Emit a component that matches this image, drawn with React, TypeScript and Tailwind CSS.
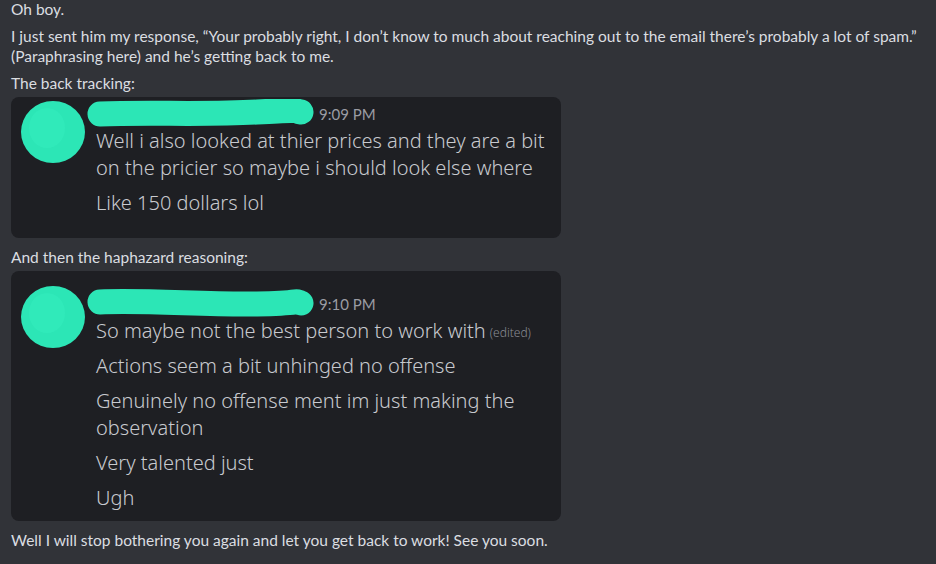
import React from "react";

interface Para {
  lines: string[];
  edited?: boolean;
}

interface CardProps {
  time: string;
  padTop: number;
  padBottom: number;
  avatarCy: number;
  blob: string;
  paras: Para[];
}

const teal = "#2ce6b6";

const Avatar = ({ cy }: { cy: number }) => (
  <svg width="76" height={cy + 34} className="shrink-0">
    <ellipse cx="42" cy={cy} rx="32" ry="31" fill={teal} />
    <ellipse cx="36" cy={cy - 4} rx="18" ry="20" fill="#3af0c2" opacity="0.35" />
  </svg>
);

const NameBlob = ({ d }: { d: string }) => (
  <svg width="228" height="28" className="shrink-0">
    <path d={d} stroke={teal} strokeWidth="25" strokeLinecap="round" fill="none" />
  </svg>
);

const Card = ({ time, padTop, padBottom, avatarCy, blob, paras }: CardProps) => (
  <div className="w-[550px] rounded-lg bg-[#1e1f23] flex items-start">
    <Avatar cy={avatarCy} />
    <div
      className="flex flex-col"
      style={{ paddingTop: padTop, paddingBottom: padBottom }}
    >
      <div className="flex items-center h-[28px]">
        <NameBlob d={blob} />
        <span className="ml-[4px] mt-[2px] text-[15px] text-[#9a9ca3]">{time}</span>
      </div>
      <div
        className="pl-[9px] flex flex-col gap-[8px] text-[20px] leading-[27px] font-light text-[#c8cacf]"
        style={{ fontFamily: '"Noto Sans", sans-serif' }}
      >
        {paras.map((p, i) => (
          <p key={i}>
            {p.lines.map((l, j) => (
              <React.Fragment key={j}>
                {j > 0 && <br />}
                {l}
              </React.Fragment>
            ))}
            {p.edited && (
              <span className="ml-[4px] text-[12px] leading-none align-middle text-[#8a8d94]">
                (edited)
              </span>
            )}
          </p>
        ))}
      </div>
    </div>
  </div>
);

export default function App() {
  return (
    <div
      className="w-[936px] h-[564px] overflow-hidden bg-[#313338] pl-[11px] text-[15.5px] leading-[20px] text-[#dbdee1]"
      style={{ fontFamily: "Lato, sans-serif" }}
    >
      <div className="flex flex-col gap-[7px] -mt-[1px]">
        <p>Oh boy.</p>
        <p className="whitespace-nowrap">
          I just sent him my response, “Your probably right, I don’t know to much about reaching out to the email there’s probably a lot of spam.”
          <br />
          (Paraphrasing here) and he’s getting back to me.
        </p>
        <p>The back tracking:</p>
      </div>
      <div className="mt-[4px]">
        <Card
          time="9:09 PM"
          padTop={2}
          padBottom={22}
          avatarCy={35}
          blob="M13 15 C60 13 120 16 170 13 S205 12 214 13"
          paras={[
            {
              lines: [
                "Well i also looked at thier prices and they are a bit",
                "on the pricier so maybe i should look else where",
              ],
            },
            { lines: ["Like 150 dollars lol"] },
          ]}
        />
      </div>
      <p className="mt-[9px]">And then the haphazard reasoning:</p>
      <div className="mt-[4px]">
        <Card
          time="9:10 PM"
          padTop={18}
          padBottom={10}
          avatarCy={46}
          blob="M13 13 C60 11 120 16 170 15 S205 11 214 14"
          paras={[
            { lines: ["So maybe not the best person to work with"], edited: true },
            { lines: ["Actions seem a bit unhinged no offense"] },
            { lines: ["Genuinely no offense ment im just making the", "observation"] },
            { lines: ["Very talented just"] },
            { lines: ["Ugh"] },
          ]}
        />
      </div>
      <p className="mt-[9px]">
        Well I will stop bothering you again and let you get back to work! See you soon.
      </p>
    </div>
  );
}
